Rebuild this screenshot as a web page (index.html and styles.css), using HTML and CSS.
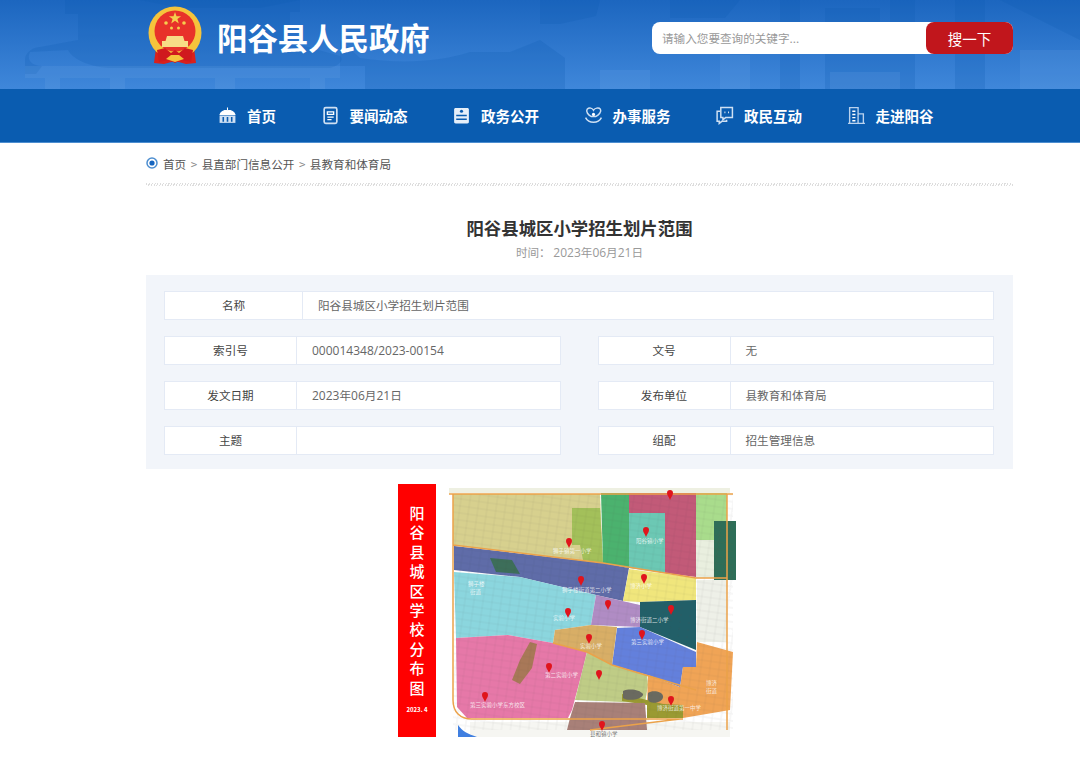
FILE: index.html
```html
<!DOCTYPE html>
<html lang="zh-CN">
<head>
  <meta charset="UTF-8">
  <title>阳谷县城区小学招生划片范围</title>
  <link rel="stylesheet" href="styles.css">
</head>
<body>
  <header class="top">
    <svg class="top__bg" viewBox="0 0 1080 89" preserveAspectRatio="none" aria-hidden="true">
      <!-- pavilion -->
      <path class="sil" d="M65 0H300V12H290V42L340 56C345 60 338 66 330 68H108C86 66 72 58 68 50L30 52C26 60 32 66 42 66L36 74H25V60C25 54 30 48 40 47L78 40V14H65Z"/>
      <path class="sil" d="M340 40L360 58C400 64 440 62 470 52H510L540 40L565 58V89H365V66H340Z"/>
      <path class="sil" d="M125 0H140L180 8H260L300 0Z"/>
      <path class="sil sil--soft" d="M25 66H340V78H25ZM45 78H60V89H45ZM110 78H125V89H110ZM215 78H235V89H215ZM310 78H325V89H310Z"/>
      <!-- town -->
      <path class="sil" d="M540 0H600L596 16L560 24H540ZM670 0H740L725 18H670ZM780 0H800V89H780ZM825 8H880V30H890V0H915V89H825ZM955 0H985V89H955ZM1000 0L1080 40V0Z"/>
      <path class="sil sil--soft" d="M600 70H650V89H600ZM720 55H750V89H720ZM830 72H900V89H830ZM1020 50H1080V89H1020Z"/>
    </svg>
    <div class="wrap top__inner">
      <svg class="emblem" width="56" height="60" viewBox="0 0 56 60" aria-label="国徽">
        <path d="M9 42L7 57L17 58L28 55L39 58L49 57L47 42Z" fill="#d9201c"/>
        <circle cx="28" cy="27" r="26.5" fill="#f5c43c"/>
        <circle cx="28" cy="25" r="20.5" fill="#e8322a"/>
        <path d="M28 6l1.500 4.300h4.600l-3.700 2.700 1.400 4.400-3.800-2.700-3.800 2.700 1.400-4.400-3.700-2.700h4.600z" fill="#f5cf4e"/>
        <circle cx="19" cy="17" r="1.800" fill="#f5cf4e"/>
        <circle cx="37" cy="17" r="1.800" fill="#f5cf4e"/>
        <circle cx="24.500" cy="22" r="1.500" fill="#f5cf4e"/>
        <circle cx="31.500" cy="22" r="1.500" fill="#f5cf4e"/>
        <path d="M20 30H36L37.500 35H41V41H15V35H18.500Z" fill="#f7dc86"/>
        <path d="M10 44L18 42L24 47L28 44L32 47L38 42L46 44L44 56L34 54L28 57L22 54L12 56Z" fill="#d01a1e"/>
        <path d="M19 53L24 49H32L37 53L28 56Z" fill="#f5c43c"/>
      </svg>
      <div class="site-name">阳谷县人民政府</div>
      <form class="search">
        <input class="search__input" type="text" placeholder="请输入您要查询的关键字...">
        <button class="search__btn" type="button">搜一下</button>
      </form>
    </div>
  </header>

  <nav class="nav">
    <div class="wrap nav__inner">
      <a class="nav__item">
        <svg class="nav__icon" viewBox="0 0 18 18"><path d="M9 1.500V4M2 8C3 5 6 4 9 4C12 4 15 5 16 8Z" fill="#fff" stroke="#fff"/><path d="M1.500 9H16.500V16H1.500Z" fill="#cfe0f3"/><path d="M5 10.500V15M9 10.500V15M13 10.500V15" stroke="#0a5cb0" stroke-width="1.500"/></svg>
        首页
      </a>
      <a class="nav__item">
        <svg class="nav__icon" viewBox="0 0 18 18"><rect x="3" y="1.500" width="12" height="15" rx="1.500" fill="none" stroke="#cfe0f3" stroke-width="1.600"/><path d="M6 5.500H12V8H6ZM6 10.500H12M6 13H10" stroke="#fff" stroke-width="1.200" fill="none"/></svg>
        要闻动态
      </a>
      <a class="nav__item">
        <svg class="nav__icon" viewBox="0 0 18 18"><path d="M2 3.500C2 2.500 2.500 2 3.500 2H14.500C15.500 2 16 2.500 16 3.500V15C16 16 15.500 16.500 14.500 16.500H3.500C2.500 16.500 2 16 2 15Z" fill="#e6eff9"/><circle cx="9" cy="5" r="1.500" fill="#0a5cb0"/><path d="M4 9H14M4 12.500H14" stroke="#0a5cb0" stroke-width="1.300"/></svg>
        政务公开
      </a>
      <a class="nav__item">
        <svg class="nav__icon" viewBox="0 0 18 18" fill="none" stroke="#cfe0f3" stroke-width="1.400"><path d="M3 3C5 1 8 2 9 4C10 2 14 1 15.500 3C17 5.500 14 8.500 11 10H7C4 8.500 1.500 5.500 3 3Z"/><path d="M1.500 11C3 14 5 15.500 9 15.500C13 15.500 15 14 16.500 11"/><circle cx="9" cy="8" r="1.500" fill="#fff" stroke="none"/></svg>
        办事服务
      </a>
      <a class="nav__item">
        <svg class="nav__icon" viewBox="0 0 18 18" fill="none" stroke="#cfe0f3" stroke-width="1.400"><path d="M5.500 1.500H16.500V11H10L7.500 13V11H5.500Z"/><path d="M5 5H2V14.500H4V16.500L6.500 14.500H11V13"/><path d="M9 6H9.800M12.500 6H13.300" stroke="#fff" stroke-width="1.800"/></svg>
        政民互动
      </a>
      <a class="nav__item">
        <svg class="nav__icon" viewBox="0 0 18 18" fill="none" stroke="#b9d2ee" stroke-width="1.300"><path d="M2.500 16.500V1.500H10.500V16.500M10.500 7.500H15.500V16.500M1 16.500H17"/><path d="M5 5H8M5 8H8M5 11H8M5 14H8" stroke="#fff"/></svg>
        走进阳谷
      </a>
    </div>
  </nav>

  <main class="wrap">
    <div class="crumb">
      <svg class="crumb__pin" width="12" height="13" viewBox="0 0 12 13"><circle cx="6" cy="6" r="5" fill="#fff" stroke="#4d8ed0" stroke-width="1.500"/><circle cx="6" cy="6" r="2.600" fill="#1565c0"/></svg>
      <span>首页</span><i>&gt;</i><span>县直部门信息公开</span><i>&gt;</i><span>县教育和体育局</span>
    </div>

    <h1 class="title">阳谷县城区小学招生划片范围</h1>
    <p class="date">时间： <span class="num">2023</span>年<span class="num">06</span>月<span class="num">21</span>日</p>

    <section class="info">
      <div class="info__row info__row--full">
        <div class="info__label">名称</div><div class="info__value">阳谷县城区小学招生划片范围</div>
      </div>
      <div class="info__row">
        <div class="info__label">索引号</div><div class="info__value"><span class="num">000014348/2023-00154</span></div>
      </div>
      <div class="info__row">
        <div class="info__label">文号</div><div class="info__value">无</div>
      </div>
      <div class="info__row">
        <div class="info__label">发文日期</div><div class="info__value"><span class="num">2023</span>年<span class="num">06</span>月<span class="num">21</span>日</div>
      </div>
      <div class="info__row">
        <div class="info__label">发布单位</div><div class="info__value">县教育和体育局</div>
      </div>
      <div class="info__row">
        <div class="info__label">主题</div><div class="info__value"></div>
      </div>
      <div class="info__row">
        <div class="info__label">组配</div><div class="info__value">招生管理信息</div>
      </div>
    </section>

    <figure class="map">
      <div class="map__strip">
        <span>阳</span><span>谷</span><span>县</span><span>城</span><span>区</span><span>学</span><span>校</span><span>分</span><span>布</span><span>图</span>
        <small>2023. 4</small>
      </div>
      <svg class="map__svg" width="325" height="253" viewBox="436 484 325 253">
        <defs>
          <filter id="soft"><feGaussianBlur stdDeviation="0.4"/></filter>
          <pattern id="grain" width="9" height="7" patternUnits="userSpaceOnUse" patternTransform="rotate(8)">
            <path d="M0 3H9M4 0V7" stroke="#334" stroke-opacity=".1" stroke-width=".6"/>
          </pattern>
          <symbol id="pin" viewBox="0 0 6 10" overflow="visible">
            <path d="M3 10C2 7 0 5.500 0 3A3 3 0 0 1 6 3C6 5.500 4 7 3 10Z" fill="#e0141c"/>
          </symbol>
        </defs>
        <g filter="url(#soft)">
          <g class="map__base">
            <path d="M696 493H727V540H696Z" fill="#a9dc8c"/>
            <path d="M696 540H727V578H696Z" fill="#e9efdf"/>
            <path d="M697 580H727V642H697Z" fill="#eef0e8"/>
            <path d="M449 488H730V493H449Z" fill="#eef0e2"/>
            <path d="M470 722H730V737H470Z" fill="#f6f6f2"/>
          </g>
          <g class="map__areas">
            <path d="M453 494H600L603 563L453 545Z" fill="#d7d08e"/>
            <path d="M572 508H600L603 563L583 560L580 545H572Z" fill="#a3c05a"/>
            <path d="M601 493H629V568L603 563Z" fill="#4cb26e"/>
            <path d="M629 493H696V577L665 573V513H629Z" fill="#c25a78"/>
            <path d="M629 513H665V573L629 568Z" fill="#6cc8b4"/>
            <path d="M714 521H736V580H714Z" fill="#2f6e58"/>
            <path d="M454 546L603 563L629 568L623 601L596 595L520 577L454 570Z" fill="#5e6ca8"/>
            <path d="M454 572L520 577L596 595L591 625L555 630L553 643L508 635L456 638Z" fill="#8bd6de"/>
            <path d="M596 595L640 605V627L591 625Z" fill="#b08cc4"/>
            <path d="M629 569L696 578V600L640 602L623 601Z" fill="#f0e67c"/>
            <path d="M640 602L696 600V650L640 627Z" fill="#235f68"/>
            <path d="M617 628L640 627L696 652V667H683L680 687L647 675L612 665Z" fill="#6480dc"/>
            <path d="M555 630L591 625L617 627L612 665L587 652L553 643Z" fill="#d8ae66"/>
            <path d="M456 638L508 635L553 643L587 652L580 680L572 710L568 718H467L457 707Z" fill="#e678a8"/>
            <path d="M587 652L612 665L647 675L648 685L645 703L575 700L580 680Z" fill="#bfcc86"/>
            <path d="M697 642L733 652L730 710L683 718H647V703L648 675L680 687L683 667H696Z" fill="#f0a456"/>
            <path d="M622 694L647 700L663 704L683 705V718H647V705L622 701Z" fill="#9a9a30"/>
            <path d="M575 702L645 703L647 730H567L570 718Z" fill="#a88078"/>
            <path d="M623 691C630 688 640 690 643 694C644 699 628 702 623 698ZM648 693C652 690 662 691 663 696C664 703 650 705 648 700Z" fill="#6b6b60"/>
            <path d="M520 660L530 642L537 644L532 668L520 684L512 680Z" fill="#a87858"/>
            <path d="M490 558L512 560L520 574L496 572Z" fill="#3d6e5a"/>
            <path d="M458 725C462 731 468 734 477 737H458Z" fill="#3f7fe0"/>
          </g>
          <rect x="453" y="494" width="280" height="236" fill="url(#grain)"/>
          <path class="map__road" d="M449 494H733M453 494V700C453 712 460 719 472 719H683M727 494V730M453 545L603 563L696 578H727M590 730L680 719M553 643L587 652L612 665L696 690"/>
        </g>
        <g class="map__labels">
          <text x="553" y="553">狮子镇第一小学</text>
          <text x="636" y="543">阳谷镇小学</text>
          <text x="468" y="586">狮子楼</text>
          <text x="470" y="594">街道</text>
          <text x="562" y="592">狮子楼街道第二小学</text>
          <text x="630" y="588">博济小学</text>
          <text x="630" y="622">博济街道二小学</text>
          <text x="553" y="620">实验小学</text>
          <text x="580" y="648">实验小学</text>
          <text x="631" y="644">第三实验小学</text>
          <text x="545" y="677">第二实验小学</text>
          <text x="470" y="707">第三实验小学东方校区</text>
          <text x="657" y="710">博济街道第一中学</text>
          <text class="dark" x="590" y="736">县和镇小学</text>
          <text x="706" y="685">博济</text>
          <text x="706" y="693">街道</text>
        </g>
        <use href="#pin" x="667" y="490" width="6" height="10"/>
        <use href="#pin" x="643" y="527" width="6" height="10"/>
        <use href="#pin" x="566" y="538" width="6" height="10"/>
        <use href="#pin" x="578" y="576" width="6" height="10"/>
        <use href="#pin" x="641" y="574" width="6" height="10"/>
        <use href="#pin" x="565" y="608" width="6" height="10"/>
        <use href="#pin" x="605" y="600" width="6" height="10"/>
        <use href="#pin" x="668" y="605" width="6" height="10"/>
        <use href="#pin" x="586" y="634" width="6" height="10"/>
        <use href="#pin" x="639" y="630" width="6" height="10"/>
        <use href="#pin" x="546" y="663" width="6" height="10"/>
        <use href="#pin" x="596" y="670" width="6" height="10"/>
        <use href="#pin" x="482" y="692" width="6" height="10"/>
        <use href="#pin" x="668" y="696" width="6" height="10"/>
        <use href="#pin" x="599" y="721" width="6" height="10"/>
      </svg>
    </figure>
  </main>
</body>
</html>
```

FILE: styles.css
```css
*{
  box-sizing:border-box;
}
body{
  margin:0;
  padding:0;
  background:#fff;
  color:#333;
  font-family:"Noto Sans CJK SC","Liberation Sans",sans-serif;
}
.wrap{
  width:867px;
  margin-left:146px;
}
.num{
  font-family:"Open Sans",sans-serif;
  font-size:12px;
}

/* header */
.top{
  position:relative;
  height:89px;
  overflow:hidden;
  background:linear-gradient(to bottom,#1c66bf,#3f87da);
}
.top__bg{
  position:absolute;
  left:0;
  top:0;
  width:100%;
  height:100%;
}
.sil{
  fill:#0f5bb0;
  opacity:.22;
}
.sil--soft{
  fill:#7fb4ec;
  opacity:.14;
}
.top__inner{
  position:relative;
  display:flex;
  align-items:flex-start;
}
.emblem{
  margin:6px 0 0 1px;
}
.site-name{
  margin:15px 0 0 14px;
  font-size:30.400px;
  line-height:44px;
  font-weight:700;
  color:#fff;
  white-space:nowrap;
}
.search{
  display:flex;
  width:361px;
  height:32px;
  margin:22px 0 0 auto;
  background:#fff;
  border-radius:8px;
}
.search__input{
  flex:1;
  min-width:0;
  padding:0 10px;
  border:0;
  outline:0;
  background:transparent;
  font:11.6px "Noto Sans CJK SC",sans-serif;
}
.search__input::placeholder{
  color:#999;
}
.search__btn{
  width:87px;
  border:0;
  border-radius:8px;
  background:#c1161c;
  color:#fff;
  font:14.5px "Noto Sans CJK SC",sans-serif;
}

/* nav */
.nav{
  height:54px;
  background:#0a5cb0;
  border-bottom:1px solid #4d8ed0;
}
.nav__inner{
  display:flex;
  align-items:center;
  gap:44.500px;
  height:53px;
  padding-left:72px;
}
.nav__item{
  display:flex;
  align-items:center;
  gap:10px;
  font-size:14.5px;
  font-weight:700;
  color:#fff;
  white-space:nowrap;
}
.nav__icon{
  width:19px;
  height:19px;
}

/* breadcrumb */
.crumb{
  display:flex;
  align-items:center;
  height:43px;
  padding-top:1px;
  border-bottom:3px solid transparent;
  border-image:repeating-linear-gradient(115deg,#ddd 0 1px,#fff 1px 2.500px) 3;
  font-size:11.6px;
  color:#555;
}
.crumb__pin{
  margin:0 5px 0 0;
}
.crumb i{
  margin:0 4.500px;
  font-style:normal;
  color:#888;
}

/* title */
.title{
  margin:30px 0 0;
  font-size:17.4px;
  line-height:24px;
  font-weight:700;
  text-align:center;
  color:#333;
}
.date{
  margin:3px 0 0;
  font-size:11.6px;
  line-height:18px;
  text-align:center;
  color:#999;
}

/* info table */
.info{
  display:grid;
  grid-template-columns:1fr 1fr;
  align-content:start;
  gap:16px 37px;
  height:194px;
  margin-top:13px;
  padding:16px 19px 0 18px;
  background:#f2f5fa;
}
.info__row{
  display:flex;
  height:29px;
  background:#fff;
  border:1px solid #e4eaf5;
  font-size:11.6px;
  line-height:27px;
}
.info__row--full{
  grid-column:1 / 3;
}
.info__label{
  flex:none;
  width:132px;
  border-right:1px solid #e4eaf5;
  text-align:center;
  color:#444;
}
.info__row--full .info__label{
  width:138px;
}
.info__value{
  padding-left:15px;
  color:#666;
}

/* map picture */
.map{
  display:flex;
  width:363px;
  height:253px;
  margin:15px auto 29px;
}
.map__strip{
  display:flex;
  flex:none;
  flex-direction:column;
  align-items:center;
  width:38px;
  padding-top:19px;
  background:#f00;
  font-family:"Noto Sans CJK SC",serif;
  font-size:15px;
  font-weight:500;
  line-height:19.400px;
  color:#fff;
}
.map__strip small{
  margin-top:8px;
  font-size:6px;
  line-height:10px;
  font-weight:700;
}
.map__svg{
  display:block;
  flex:none;
}
.map__road{
  fill:none;
  stroke:#eba24a;
  stroke-width:1.500;
}
.map__labels text{
  font-family:"Noto Sans CJK SC",sans-serif;
  font-size:5.500px;
  fill:#fff;
  fill-opacity:.8;
}
.map__labels .dark{
  fill:#555;
}
```
